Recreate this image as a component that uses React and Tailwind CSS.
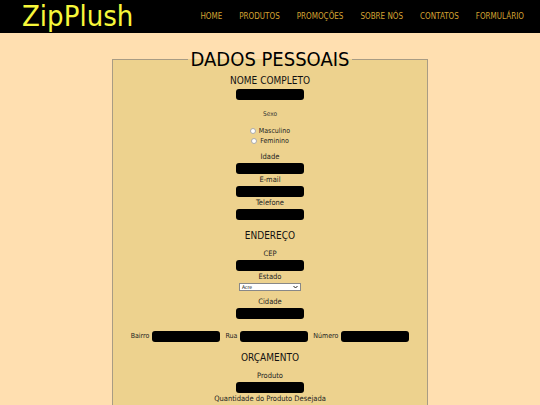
import React from "react";

const F = { fontFamily: "'DejaVu Sans Condensed', 'Liberation Sans Narrow', sans-serif" };

function Box({ className = "" }) {
  return <div className={"h-[11px] w-[68px] rounded-[3px] bg-black " + className} />;
}

function Label({ children, className = "" }) {
  return <div className={"text-[7.5px] leading-[12px] text-[#222] " + className}>{children}</div>;
}

function Radio({ label }) {
  return (
    <div className="flex items-center justify-center leading-[10px] text-[7px] text-[#222]">
      <span className="mr-[3px] inline-block h-[6px] w-[6px] rounded-full border border-[#aaa] bg-white" />
      <span>{label}</span>
    </div>
  );
}

export default function App() {
  const nav = ["HOME", "PRODUTOS", "PROMOÇÕES", "SOBRE NÓS", "CONTATOS", "FORMULÁRIO"];
  return (
    <div className="min-h-[405px] bg-[#ffdfb0]" style={F}>
      <header className="flex h-[33px] items-center bg-black pl-[22px] pr-[16px]">
        <div className="text-[29px] leading-none text-[#f7f73a]">ZipPlush</div>
        <nav className="ml-auto flex gap-[17px] text-[8px] text-[#d4a332]">
          {nav.map((n) => (
            <span key={n}>{n}</span>
          ))}
        </nav>
      </header>
      <div className="pt-[13px]">
        <fieldset className="mx-auto w-[316px] border border-[#a89c84] bg-[#edd28e] pb-2">
          <legend className="mx-auto px-[3px] text-[20px] leading-[26px] text-black">DADOS PESSOAIS</legend>
          <div className="flex flex-col items-center pt-[3px] text-center">
            <div className="text-[10px] leading-[12px] text-[#111]">NOME COMPLETO</div>
            <Box className="mt-[2px]" />
            <div className="mt-[8px] text-[6.5px] leading-[12px] text-[#333]">Sexo</div>
            <div className="mt-[6px]">
              <Radio label="Masculino" />
              <Radio label="Feminino" />
            </div>
            <Label className="mt-[5px]">Idade</Label>
            <Box />
            <Label>E-mail</Label>
            <Box />
            <Label>Telefone</Label>
            <Box />
            <div className="mt-[9px] text-[10px] leading-[14px] text-[#111]">ENDEREÇO</div>
            <Label className="mt-[5px]">CEP</Label>
            <Box />
            <Label className="leading-[11px]">Estado</Label>
            <div className="flex h-[8px] w-[62px] items-center justify-between border border-[#888] bg-white px-[2px] text-[5px] leading-none text-black">
              <span>Acre</span>
              <svg width="5" height="4" viewBox="0 0 5 4">
                <path d="M0.5 1 L2.5 3 L4.5 1" stroke="#222" strokeWidth="1" fill="none" />
              </svg>
            </div>
            <Label className="mt-[5px]">Cidade</Label>
            <Box />
            <div className="mt-[12px] flex items-center text-[7px] text-[#222]">
              <span className="mr-[3px]">Bairro</span>
              <Box className="w-[67px]" />
              <span className="ml-[5px] mr-[3px]">Rua</span>
              <Box className="w-[66px]" />
              <span className="ml-[5px] mr-[3px]">Número</span>
              <Box className="w-[67px]" />
            </div>
            <div className="mt-[9px] text-[10px] leading-[14px] text-[#111]">ORÇAMENTO</div>
            <Label className="mt-[5px] text-[6px]">Produto</Label>
            <Box />
            <Label className="text-[5.5px]">Quantidade do Produto Desejada</Label>
            <Box />
          </div>
        </fieldset>
      </div>
    </div>
  );
}
